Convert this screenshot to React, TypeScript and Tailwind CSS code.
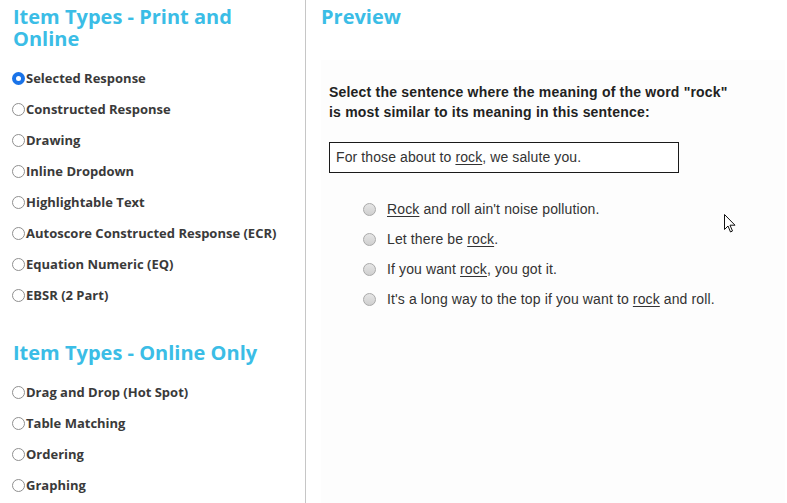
import React from "react";

const printOnline = [
  "Selected Response",
  "Constructed Response",
  "Drawing",
  "Inline Dropdown",
  "Highlightable Text",
  "Autoscore Constructed Response (ECR)",
  "Equation Numeric (EQ)",
  "EBSR (2 Part)",
];

const onlineOnly = ["Drag and Drop (Hot Spot)", "Table Matching", "Ordering", "Graphing"];

function TypeRadio({ label, checked }: { label: string; checked?: boolean }) {
  return (
    <div className="flex h-[31px] items-center">
      {checked ? (
        <span className="flex h-[13px] w-[13px] shrink-0 items-center justify-center rounded-full bg-[#1a73e8]">
          <span className="h-[5px] w-[5px] rounded-full bg-white" />
        </span>
      ) : (
        <span className="h-[13px] w-[13px] shrink-0 rounded-full border border-[#8f8f8f] bg-white" />
      )}
      <span className="pl-px text-[13px] font-bold text-[#3a3a3a]">{label}</span>
    </div>
  );
}

function Option({ children }: { children: React.ReactNode }) {
  return (
    <div className="flex h-[30px] items-center">
      <span className="h-[13px] w-[13px] shrink-0 rounded-full border border-[#a9a9a9] bg-gradient-to-b from-[#e6e6e6] to-[#cfcfcf]" />
      <span className="pl-[11px] text-[14px] tracking-[0.12px] text-[#333]">{children}</span>
    </div>
  );
}

function Rock({ text = "rock" }: { text?: string }) {
  return <span className="underline underline-offset-2">{text}</span>;
}

export default function App() {
  return (
    <div className="flex h-[503px] w-[787px] overflow-hidden bg-white font-['Open_Sans',sans-serif]">
      <div className="w-[306px] shrink-0 border-r border-[#c6c6c6] pl-3">
        <h2 className="mt-[6px] pl-px text-[20px] font-bold leading-[22px] text-[#3bbde6]">
          Item Types - Print and
          <br />
          Online
        </h2>
        <div className="mt-[13px]">
          {printOnline.map((t, i) => (
            <TypeRadio key={t} label={t} checked={i === 0} />
          ))}
        </div>
        <h2 className="mt-[31px] pl-px text-[20px] font-bold leading-[22px] text-[#3bbde6]">
          Item Types - Online Only
        </h2>
        <div className="mt-[13px]">
          {onlineOnly.map((t) => (
            <TypeRadio key={t} label={t} />
          ))}
        </div>
      </div>

      <div className="relative flex flex-1 flex-col pl-[15px] pr-[2px]">
        <h2 className="mt-[6px] text-[20px] font-bold leading-[22px] text-[#3bbde6]">Preview</h2>
        <div className="mt-[32px] flex-1 bg-[#fdfdfd] pl-[8px] pt-[22px] font-['Liberation_Sans',Arial,sans-serif]">
          <p className="text-[14px] font-bold leading-[20px] tracking-[0.2px] text-[#222]">
            Select the sentence where the meaning of the word "rock"
            <br />
            is most similar to its meaning in this sentence:
          </p>
          <div className="mt-[20px] flex h-[31px] w-[350px] items-center border border-[#1a1a1a] bg-white pl-[6px] text-[14px] tracking-[0.1px] text-[#333]">
            <span>
              For those about to <Rock />, we salute you.
            </span>
          </div>
          <div className="mt-[21px] pl-[34px]">
            <Option>
              <Rock text="Rock" /> and roll ain't noise pollution.
            </Option>
            <Option>
              Let there be <Rock />.
            </Option>
            <Option>
              If you want <Rock />, you got it.
            </Option>
            <Option>
              It's a long way to the top if you want to <Rock /> and roll.
            </Option>
          </div>
        </div>
        <svg
          className="absolute left-[418px] top-[214px]"
          width="12"
          height="20"
          viewBox="0 0 12 20"
        >
          <path
            d="M0.5 0.5 L0.5 15.5 L4 12 L6.5 18 L8.5 17 L6 11.2 L11 11.2 Z"
            fill="#fff"
            stroke="#111"
            strokeWidth="1"
            strokeLinejoin="miter"
          />
        </svg>
      </div>
    </div>
  );
}
